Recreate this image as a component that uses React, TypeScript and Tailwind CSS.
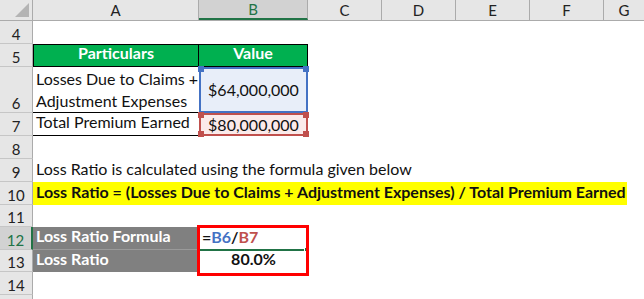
import React from "react";

const font = { fontFamily: "Lato, 'Liberation Sans', sans-serif" };

function RowHead({ n, h, active }: { n?: number; h: string; active?: boolean }) {
  return (
    <div
      className={`${h} w-[33px] shrink-0 flex items-end justify-center pb-[1px] text-[15px] leading-none border-b border-[#c6c6c6] ${
        active ? "bg-[#d2d2d2] text-[#217346] border-r-2 border-r-[#217346]" : "bg-[#e6e6e6] text-[#222] border-r border-r-[#ababab]"
      }`}
    >
      {n}
    </div>
  );
}

function Handle({ pos, color }: { pos: string; color: string }) {
  return <div className={`absolute w-[6px] h-[6px] ${pos} ${color}`} />;
}

export default function App() {
  const cols = ["C", "D", "E", "F"];
  return (
    <div className="w-[644px] h-[299px] overflow-hidden bg-white text-[16px] text-[#111] relative" style={font}>
      {/* column header */}
      <div className="flex h-[21px] bg-[#e6e6e6] border-b border-[#ababab] text-[15px]">
        <div className="w-[33px] shrink-0 border-r border-[#ababab] relative">
          <div className="absolute right-[3px] bottom-[3px] w-0 h-0 border-l-[14px] border-l-transparent border-b-[14px] border-b-[#b4b4b4]" />
        </div>
        <div className="w-[166px] shrink-0 border-r border-[#ababab] flex items-center justify-center text-[#222]">A</div>
        <div className="w-[109px] shrink-0 border-r border-[#ababab] flex items-center justify-center bg-[#d2d2d2] text-[#217346] border-b-2 border-b-[#217346]">B</div>
        {cols.map((c) => (
          <div key={c} className="w-[74px] shrink-0 border-r border-[#ababab] flex items-center justify-center text-[#222]">
            {c}
          </div>
        ))}
        <div className="flex-1 flex items-center justify-center text-[#222]">G</div>
      </div>

      {/* row 4 */}
      <div className="flex">
        <RowHead n={4} h="h-[23px]" />
      </div>

      {/* row 5 */}
      <div className="flex">
        <RowHead n={5} h="h-[23px]" />
        <div className="w-[166px] h-[23px] bg-[#00b050] border border-black text-white font-bold flex items-end justify-center pb-[1px]">Particulars</div>
        <div className="w-[109px] h-[23px] bg-[#00b050] border border-l-0 border-black text-white font-bold flex items-end justify-center pb-[1px]">Value</div>
      </div>

      {/* row 6 */}
      <div className="flex">
        <RowHead n={6} h="h-[46px]" />
        <div className="w-[166px] h-[46px] border-b border-black pl-[3px] leading-[22px] pt-[1px] whitespace-nowrap">
          <div>Losses Due to Claims +</div>
          <div>Adjustment Expenses</div>
        </div>
        <div className="w-[109px] h-[46px] relative bg-[#e8eef9] border-2 border-[#4472c4] flex items-center justify-center">
          $64,000,000
          <Handle pos="-left-[3px] -top-[3px]" color="bg-[#4472c4]" />
          <Handle pos="-right-[3px] -top-[3px]" color="bg-[#4472c4]" />
        </div>
      </div>

      {/* row 7 */}
      <div className="flex">
        <RowHead n={7} h="h-[23px]" />
        <div className="w-[166px] h-[23px] border-b border-black pl-[3px] flex items-end pb-[1px] whitespace-nowrap">Total Premium Earned</div>
        <div className="w-[109px] h-[23px] relative bg-[#fbeaea] border-2 border-[#c0504d] flex items-center justify-center">
          $80,000,000
          <Handle pos="-left-[3px] -top-[3px]" color="bg-[#c0504d]" />
          <Handle pos="-right-[3px] -top-[3px]" color="bg-[#c0504d]" />
          <Handle pos="-left-[3px] -bottom-[3px]" color="bg-[#c0504d]" />
          <Handle pos="-right-[3px] -bottom-[3px]" color="bg-[#c0504d]" />
        </div>
      </div>

      {/* row 8 */}
      <div className="flex">
        <RowHead n={8} h="h-[23px]" />
      </div>

      {/* row 9 */}
      <div className="flex">
        <RowHead n={9} h="h-[23px]" />
        <div className="h-[23px] pl-[3px] flex items-end pb-[1px] whitespace-nowrap">Loss Ratio is calculated using the formula given below</div>
      </div>

      {/* row 10 */}
      <div className="flex">
        <RowHead n={10} h="h-[23px]" />
        <div className="w-[594px] h-[23px] bg-[#ffff00] pl-[3px] font-bold flex items-end pb-[1px] whitespace-nowrap">
          Loss Ratio = (Losses Due to Claims + Adjustment Expenses) / Total Premium Earned
        </div>
      </div>

      {/* row 11 */}
      <div className="flex">
        <RowHead n={11} h="h-[22px]" />
      </div>

      {/* row 12 */}
      <div className="flex">
        <RowHead n={12} h="h-[23px]" active />
        <div className="w-[165px] h-[23px] bg-[#808080] border-b border-[#9a9a9a] text-white font-bold pl-[3px] flex items-end pb-[1px] whitespace-nowrap">Loss Ratio Formula</div>
        <div className="w-[110px] h-[23px] font-bold pl-[4px] flex items-end pb-[1px]">
          <span>=</span>
          <span className="text-[#4472c4]">B6</span>
          <span>/</span>
          <span className="text-[#c0504d]">B7</span>
        </div>
      </div>

      {/* row 13 */}
      <div className="flex">
        <RowHead n={13} h="h-[22px]" />
        <div className="w-[166px] h-[22px] bg-[#808080] text-white font-bold pl-[3px] flex items-end pb-[1px]">Loss Ratio</div>
        <div className="w-[109px] h-[22px] font-bold flex items-end justify-center pb-[1px]">80.0%</div>
      </div>

      {/* row 14 */}
      <div className="flex">
        <RowHead n={14} h="h-[23px]" />
      </div>

      {/* row 15 */}
      <div className="flex">
        <RowHead h="h-[10px]" />
      </div>

      {/* selection on B12 */}
      <div className="absolute left-[200px] top-[249px] w-[106px] h-[2px] bg-[#217346]" />
      <div className="absolute left-[304px] top-[247px] w-[5px] h-[5px] bg-[#217346] border border-white" />

      {/* red highlight box */}
      <div className="absolute left-[197px] top-[225px] w-[112px] h-[51px] border-[3px] border-[#ff0000]" />
    </div>
  );
}
